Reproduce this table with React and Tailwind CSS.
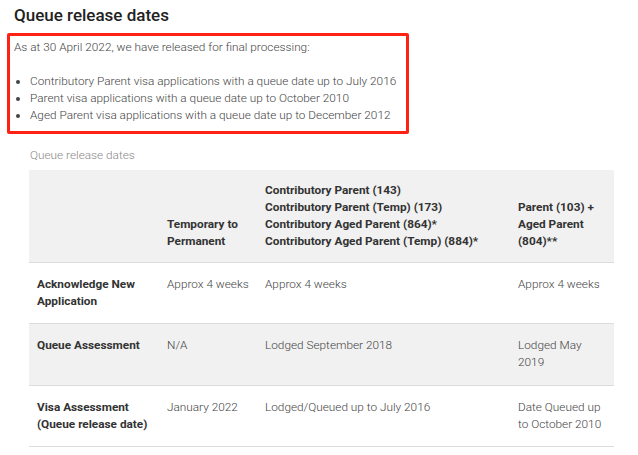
import React from "react";

const rows = [
  {
    label: "Acknowledge New Application",
    cells: ["Approx 4 weeks", "Approx 4 weeks", "Approx 4 weeks"],
    bg: "bg-white",
  },
  {
    label: "Queue Assessment",
    cells: ["N/A", "Lodged September 2018", "Lodged May 2019"],
    bg: "bg-[#f1f1f1]",
  },
  {
    label: "Visa Assessment (Queue release date)",
    cells: ["January 2022", "Lodged/Queued up to July 2016", "Date Queued up to October 2010"],
    bg: "bg-white",
  },
];

export default function App() {
  return (
    <div
      className="w-[638px] h-[455px] bg-white overflow-hidden text-[11.8px] leading-[17px] text-[#444]"
      style={{ fontFamily: "Roboto, 'Liberation Sans', sans-serif" }}
    >
      <h2 className="pl-[14px] pt-[3px] text-[17px] leading-[24px] font-medium text-[#222]">
        Queue release dates
      </h2>
      <div className="ml-[7px] mt-[6px] w-[402px] border-[3px] border-[#ff2113] rounded-[2px] pl-[4px] pt-[3px] pb-[7px] font-light">
        <p className="mb-[17px]">As at 30 April 2022, we have released for final processing:</p>
        <ul className="list-disc pl-[16px]">
          <li>Contributory Parent visa applications with a queue date up to July 2016</li>
          <li>Parent visa applications with a queue date up to October 2010</li>
          <li>Aged Parent visa applications with a queue date up to December 2012</li>
        </ul>
      </div>
      <div className="pl-[30px] mt-[13px] text-[#888] font-light">Queue release dates</div>
      <table className="ml-[29px] mt-[6px] w-[585px] table-fixed border-collapse">
        <colgroup>
          <col className="w-[130px]" />
          <col className="w-[98px]" />
          <col className="w-[253px]" />
          <col className="w-[104px]" />
        </colgroup>
        <thead>
          <tr className="bg-[#f1f1f1] border-b border-[#dcdcdc] text-[#333] font-bold text-left">
            <th className="px-[8px] py-[12px] align-bottom"></th>
            <th className="pl-[8px] pr-[2px] py-[12px] align-bottom font-bold">Temporary to Permanent</th>
            <th className="px-[8px] py-[12px] align-bottom font-bold">
              Contributory Parent (143)
              <br />
              Contributory Parent (Temp) (173)
              <br />
              Contributory Aged Parent (864)*
              <br />
              Contributory Aged Parent (Temp) (884)*
            </th>
            <th className="px-[8px] py-[12px] align-bottom font-bold">Parent (103) + Aged Parent (804)**</th>
          </tr>
        </thead>
        <tbody>
          {rows.map((r) => (
            <tr key={r.label} className={`${r.bg} border-b border-[#dcdcdc] h-[61.4px]`}>
              <td className="px-[8px] py-[13px] align-top font-bold text-[#333]">{r.label}</td>
              {r.cells.map((c, i) => (
                <td
                  key={i}
                  className={`${i === 0 ? "pl-[8px] pr-[2px]" : "px-[8px]"} py-[13px] align-top font-light`}
                >
                  {c}
                </td>
              ))}
            </tr>
          ))}
        </tbody>
      </table>
    </div>
  );
}
